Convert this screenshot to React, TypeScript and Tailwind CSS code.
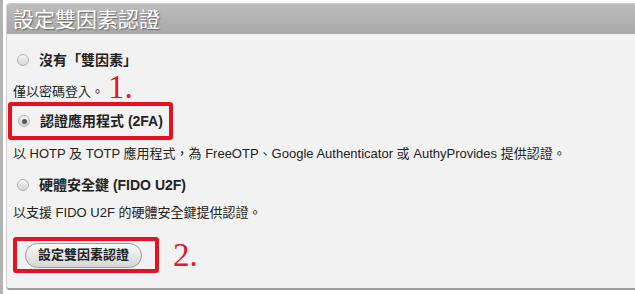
const font = { fontFamily: '"Liberation Sans", "Noto Sans CJK TC", sans-serif' }
const serif = { fontFamily: '"Liberation Serif", serif' }

function Radio({ checked }: { checked?: boolean }) {
    return (
        <span className="relative flex h-[12px] w-[12px] shrink-0 items-center justify-center rounded-full border border-[#b0b0b0] bg-gradient-to-b from-[#f6f6f6] to-[#d4d4d4]">
            {checked && <span className="h-[5px] w-[5px] rounded-full bg-[#555]" />}
        </span>
    )
}

export default function App() {
    return (
        <div className="flex h-[294px] w-[635px] overflow-hidden bg-white text-[#222]" style={font}>
            <div className="w-[3px] shrink-0 bg-[#b3b3b3]" />
            <div className="mt-[3px] ml-[3px] flex h-[287px] w-[640px] shrink-0 flex-col overflow-hidden rounded-tl-[4px] rounded-bl-[4px] border border-[#cfcfcf] border-b-2 border-b-[#9e9e9e] bg-[#f2f2f2]">
                <div className="flex h-[30px] items-center bg-gradient-to-b from-[#bdbdbd] to-[#a8a8a8] pl-[6px]">
                    <span className="text-[21px] leading-none text-white [text-shadow:1px_1px_1px_#666]">設定雙因素認證</span>
                </div>

                <div className="flex flex-col pt-[16px] pl-[6px]">
                    <div className="flex h-[20px] items-center gap-[10px] pl-[4px]">
                        <Radio />
                        <span className="text-[14px] font-bold">沒有「雙因素」</span>
                    </div>

                    <div className="mt-[9px] flex h-[22px] items-end gap-[4px]">
                        <span className="text-[13px] leading-[18px]">僅以密碼登入。</span>
                        <span className="text-[33px] leading-[27px] text-[#d2232a]" style={serif}>1.</span>
                    </div>

                    <div className="mt-[1px] -ml-[5px] flex h-[38px] w-[165px] items-center gap-[10px] rounded-[3px] border-4 border-[#e8101e] pl-[6px]">
                        <Radio checked />
                        <span className="text-[14px] font-bold">認證應用程式 (2FA)</span>
                    </div>

                    <div className="mt-[5px] flex h-[18px] items-center text-[13px]">
                        以 HOTP 及 TOTP 應用程式，為 FreeOTP、Google Authenticator 或 AuthyProvides 提供認證。
                    </div>

                    <div className="mt-[12px] flex h-[20px] items-center gap-[10px] pl-[4px]">
                        <Radio />
                        <span className="text-[14px] font-bold">硬體安全鍵 (FIDO U2F)</span>
                    </div>

                    <div className="mt-[9px] flex h-[18px] items-center text-[13px]">
                        以支援 FIDO U2F 的硬體安全鍵提供認證。
                    </div>

                    <div className="mt-[15px] flex items-center gap-[14px]">
                        <div className="flex h-[36px] w-[146px] items-center rounded-[3px] border-4 border-[#e8101e] pl-[8px]">
                            <button className="h-[25px] rounded-full border border-[#9a9a9a] bg-gradient-to-b from-[#fafafa] to-[#d6d6d6] px-[12px] text-[13px] font-bold text-[#222]">
                                設定雙因素認證
                            </button>
                        </div>
                        <span className="text-[33px] leading-none text-[#d2232a]" style={serif}>2.</span>
                    </div>
                </div>
            </div>
        </div>
    )
}
